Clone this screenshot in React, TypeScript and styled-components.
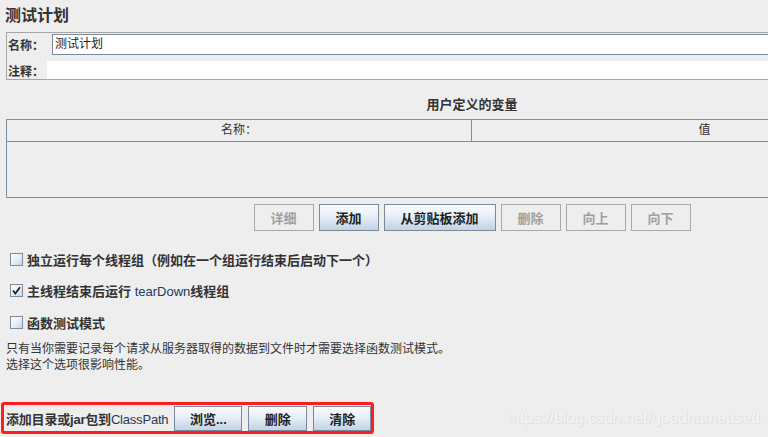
import React from "react";
import styled, { createGlobalStyle, css } from "styled-components";

const Global = createGlobalStyle`
  html, body { margin: 0; padding: 0; background: #eeeeee; overflow: hidden; }
  body {
    font-family: "Liberation Sans", "Noto Sans CJK SC", sans-serif;
    color: #333333;
  }
  * { box-sizing: border-box; }
`;

const Page = styled.div`
  position: relative;
  width: 768px;
  height: 437px;
  overflow: hidden;
  background: #eeeeee;
`;

const Panel = styled.div`
  width: 944px;
  display: flex;
  flex-direction: column;
`;

const Title = styled.div`
  height: 32px;
  line-height: 32px;
  padding-left: 5px;
  font-size: 16px;
  font-weight: 700;
  color: #333333;
`;

const InfoBox = styled.div`
  margin-left: 6px;
  border: 1px solid #a6a6a6;
  border-right: none;
  padding-top: 1px;
  display: flex;
  flex-direction: column;
  gap: 6px;
`;

const InfoRow = styled.div<{ $h: number }>`
  display: flex;
  align-items: center;
  height: ${(p) => p.$h}px;
`;

const InfoLabel = styled.div<{ $w: number }>`
  width: ${(p) => p.$w}px;
  padding-left: 1px;
  font-size: 12px;
  font-weight: 700;
  color: #333333;
`;

const Field = styled.div<{ $bordered?: boolean }>`
  flex: 1;
  height: 100%;
  background: #ffffff;
  font-size: 12px;
  line-height: 19px;
  padding-left: 2px;
  color: #222222;
  ${(p) =>
    p.$bordered &&
    css`
      border: 1px solid #7a8a9a;
      border-right: none;
    `}
`;

const VarTitle = styled.div`
  text-align: center;
  padding-top: 16px;
  padding-bottom: 6px;
  line-height: 17px;
  font-size: 13px;
  font-weight: 700;
  color: #333333;
`;

const Table = styled.div`
  margin-left: 6px;
  width: 932px;
  border: 1px solid #7f8e9c;
  display: flex;
  flex-direction: column;
`;

const HeaderRow = styled.div`
  display: grid;
  grid-template-columns: 465px 1fr;
  height: 22px;
  border-bottom: 1px solid #7f8e9c;
`;

const HeaderCell = styled.div<{ $divider?: boolean }>`
  text-align: center;
  font-size: 12px;
  line-height: 21px;
  color: #333333;
  ${(p) => p.$divider && css`border-right: 1px solid #7f8e9c;`}
`;

const TableBody = styled.div`
  height: 55px;
`;

const ButtonBar = styled.div`
  margin-top: 6px;
  display: flex;
  justify-content: center;
  gap: 5px;
`;

const Btn = styled.div<{ $w: number; $h?: number; $disabled?: boolean }>`
  width: ${(p) => p.$w}px;
  height: ${(p) => p.$h ?? 27}px;
  display: flex;
  align-items: center;
  justify-content: center;
  font-size: 13px;
  font-weight: 700;
  ${(p) =>
    p.$disabled
      ? css`
          border: 1px solid #a8a8a8;
          background: #eeeeee;
          color: #a0a0a0;
        `
      : css`
          border: 1px solid #7a8a9a;
          background: linear-gradient(to bottom, #fbfcfe 0%, #e6eef6 45%, #c3d3e3 100%);
          color: #222222;
        `}
`;

const Options = styled.div`
  margin-top: 12px;
  display: flex;
  flex-direction: column;
`;

const OptionRow = styled.div<{ $h: number }>`
  height: ${(p) => p.$h}px;
  display: flex;
  align-items: center;
  padding-left: 10px;
`;

const Box = styled.span`
  width: 13px;
  height: 13px;
  border: 1px solid #7d8d9d;
  background: linear-gradient(135deg, #ffffff 0%, #e8eff6 50%, #c8d6e4 100%);
  display: flex;
  align-items: center;
  justify-content: center;
  margin-right: 4px;
`;

const OptionText = styled.span`
  font-size: 13px;
  font-weight: 700;
  color: #333333;
`;

const Latin = styled.span`
  font-weight: 400;
  color: #22395c;
`;

const Note = styled.div`
  margin-top: 3px;
  padding-left: 6px;
  font-size: 12px;
  line-height: 16px;
  color: #333333;
`;

const ClassPathBar = styled.div`
  margin-top: 29px;
  margin-left: 1px;
  align-self: flex-start;
  border: 3px solid #ff1d1d;
  border-radius: 3px;
  height: 32px;
  display: flex;
  align-items: center;
  gap: 6px;
`;

const ClassPathLabel = styled.span`
  padding-left: 2px;
  font-size: 13px;
  font-weight: 700;
  letter-spacing: -0.2px;
  color: #333333;
`;

const Watermark = styled.div`
  position: absolute;
  right: 8px;
  top: 409px;
  font-family: "Liberation Sans", sans-serif;
  font-size: 15.7px;
  color: #f7f7f7;
  text-shadow: 0 0 1px #d8d8d8, 1px 1px 1px #dedede;
`;

const Check = () => (
  <svg width="9" height="9" viewBox="0 0 9 9">
    <path d="M1 4.5 L3.3 7.5 L8 1.3" fill="none" stroke="#222" strokeWidth="1.8" />
  </svg>
);

const CheckBox = ({ checked }: { checked?: boolean }) => <Box>{checked && <Check />}</Box>;

export default function App() {
  return (
    <Page>
      <Global />
      <Panel>
        <Title>测试计划</Title>
        <InfoBox>
          <InfoRow $h={21}>
            <InfoLabel $w={45}>名称：</InfoLabel>
            <Field $bordered>测试计划</Field>
          </InfoRow>
          <InfoRow $h={18}>
            <InfoLabel $w={40}>注释：</InfoLabel>
            <Field />
          </InfoRow>
        </InfoBox>
        <VarTitle>用户定义的变量</VarTitle>
        <Table>
          <HeaderRow>
            <HeaderCell $divider>名称：</HeaderCell>
            <HeaderCell>值</HeaderCell>
          </HeaderRow>
          <TableBody />
        </Table>
        <ButtonBar>
          <Btn $w={60} $disabled>详细</Btn>
          <Btn $w={60}>添加</Btn>
          <Btn $w={112}>从剪贴板添加</Btn>
          <Btn $w={60} $disabled>删除</Btn>
          <Btn $w={60} $disabled>向上</Btn>
          <Btn $w={60} $disabled>向下</Btn>
        </ButtonBar>
        <Options>
          <OptionRow $h={32}>
            <CheckBox />
            <OptionText>独立运行每个线程组（例如在一个组运行结束后启动下一个）</OptionText>
          </OptionRow>
          <OptionRow $h={31}>
            <CheckBox checked />
            <OptionText>
              主线程结束后运行 <Latin>tearDown</Latin>线程组
            </OptionText>
          </OptionRow>
          <OptionRow $h={32}>
            <CheckBox />
            <OptionText>函数测试模式</OptionText>
          </OptionRow>
        </Options>
        <Note>
          只有当你需要记录每个请求从服务器取得的数据到文件时才需要选择函数测试模式。
          <br />
          选择这个选项很影响性能。
        </Note>
        <ClassPathBar>
          <ClassPathLabel>
            添加目录或jar包到<Latin>ClassPath</Latin>
          </ClassPathLabel>
          <Btn $w={68} $h={25}>浏览...</Btn>
          <Btn $w={59} $h={25}>删除</Btn>
          <Btn $w={58} $h={25}>清除</Btn>
        </ClassPathBar>
      </Panel>
      <Watermark>https://blog.csdn.net/goodnameused</Watermark>
    </Page>
  );
}
